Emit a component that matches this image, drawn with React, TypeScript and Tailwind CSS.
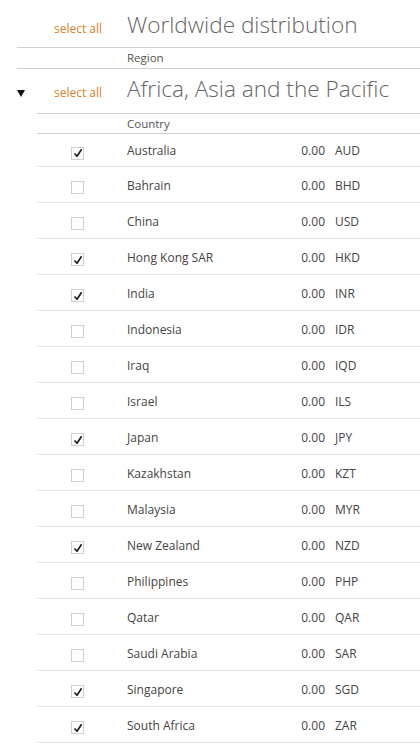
import React from "react";

type Country = {
  name: string;
  amount: string;
  currency: string;
  checked: boolean;
};

const countries: Country[] = [
  { name: "Australia", amount: "0.00", currency: "AUD", checked: true },
  { name: "Bahrain", amount: "0.00", currency: "BHD", checked: false },
  { name: "China", amount: "0.00", currency: "USD", checked: false },
  { name: "Hong Kong SAR", amount: "0.00", currency: "HKD", checked: true },
  { name: "India", amount: "0.00", currency: "INR", checked: true },
  { name: "Indonesia", amount: "0.00", currency: "IDR", checked: false },
  { name: "Iraq", amount: "0.00", currency: "IQD", checked: false },
  { name: "Israel", amount: "0.00", currency: "ILS", checked: false },
  { name: "Japan", amount: "0.00", currency: "JPY", checked: true },
  { name: "Kazakhstan", amount: "0.00", currency: "KZT", checked: false },
  { name: "Malaysia", amount: "0.00", currency: "MYR", checked: false },
  { name: "New Zealand", amount: "0.00", currency: "NZD", checked: true },
  { name: "Philippines", amount: "0.00", currency: "PHP", checked: false },
  { name: "Qatar", amount: "0.00", currency: "QAR", checked: false },
  { name: "Saudi Arabia", amount: "0.00", currency: "SAR", checked: false },
  { name: "Singapore", amount: "0.00", currency: "SGD", checked: true },
  { name: "South Africa", amount: "0.00", currency: "ZAR", checked: true },
];

const Checkbox = ({ checked }: { checked: boolean }) => (
  <div className="w-[13px] h-[13px] border border-[#cfcfcf] bg-white flex items-center justify-center">
    {checked && (
      <svg width="10" height="10" viewBox="0 0 10 10">
        <path
          d="M1.5 5.5 L4 8.3 L8.6 1.2"
          fill="none"
          stroke="#1a1a1a"
          strokeWidth="1.6"
          strokeLinejoin="round"
        />
      </svg>
    )}
  </div>
);

const SelectAll = () => (
  <span className="text-[12px] text-[#d9822b] w-[73px] shrink-0">select all</span>
);

export default function App() {
  return (
    <div
      className="bg-white w-[420px] min-h-[745px] text-[#444]"
      style={{ fontFamily: '"Open Sans", "Noto Sans", sans-serif' }}
    >
      {/* worldwide */}
      <div className="ml-[17px] border-b border-[#cfcfcf] h-[48px]">
        <div className="flex items-baseline pl-[37px] pt-[9px]">
          <SelectAll />
          <span className="text-[22.6px] leading-[31px] font-light text-[#666]">
            Worldwide distribution
          </span>
        </div>
      </div>
      <div className="ml-[17px] border-b border-[#cfcfcf] h-[21px] flex items-center pl-[110px] text-[11.5px] text-[#555]">
        Region
      </div>

      {/* region */}
      <div className="flex h-[45px]">
        <div className="w-[37px] shrink-0 pl-[17px] pt-[20px]">
          <svg width="8" height="8" viewBox="0 0 8 8">
            <path d="M0 1 L8 1 L4 8 Z" fill="#111" />
          </svg>
        </div>
        <div className="flex-1 h-full border-b border-[#cfcfcf]">
          <div className="flex items-baseline pl-[17px] pt-[4px]">
            <SelectAll />
            <span className="text-[22.6px] leading-[31px] font-light text-[#666]">
              Africa, Asia and the Pacific
            </span>
          </div>
        </div>
      </div>
      <div className="ml-[37px] border-b border-[#cfcfcf] h-[20px] flex items-center pl-[90px] text-[11.5px] text-[#555]">
        Country
      </div>

      {/* countries */}
      <div className="ml-[37px]">
        {countries.map((c, i) => (
          <div
            key={c.name}
            className={`flex items-center border-b border-[#e6e6e6] text-[12px] pt-[2px] ${
              i === 0 ? "h-[33px]" : "h-[36px]"
            }`}
          >
            <div className="w-[90px] shrink-0 pl-[34px] pt-[4px]">
              <Checkbox checked={c.checked} />
            </div>
            <div className="flex-1">{c.name}</div>
            <div className="w-[80px] text-right">{c.amount}</div>
            <div className="w-[95px] pl-[10px]">{c.currency}</div>
          </div>
        ))}
      </div>
    </div>
  );
}
